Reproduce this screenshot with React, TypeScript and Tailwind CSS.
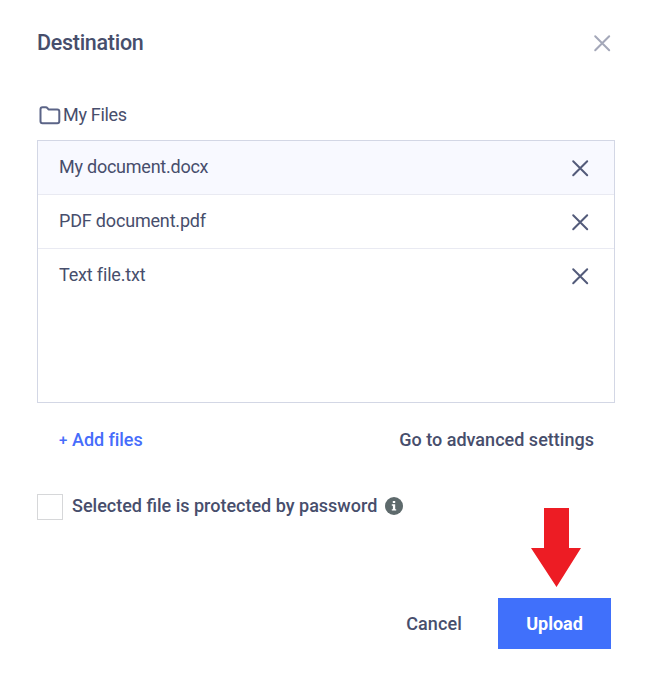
type IconProps = { className?: string };

function Cross({ className }: IconProps) {
  return (
    <svg viewBox="0 0 18 18" width="18" height="18" fill="none" stroke="currentColor" strokeWidth="2" strokeLinecap="round" className={className} aria-hidden="true">
      <path d="M2.2 2.2L16.2 16.2M16.2 2.2L2.2 16.2" />
    </svg>
  );
}

function Folder() {
  return (
    <svg viewBox="0 0 22 20" width="22" height="20" fill="none" stroke="#5b6487" strokeWidth="2" strokeLinejoin="round" aria-hidden="true">
      <path d="M1.5 4.2Q1.5 2.2 3.5 2.2H6.6Q7.8 2.2 8.5 3.2L9.5 4.5H18.3Q20.3 4.5 20.3 6.5V16.2Q20.3 18.2 18.3 18.2H3.5Q1.5 18.2 1.5 16.2Z" />
    </svg>
  );
}

function Info() {
  return (
    <svg viewBox="0 0 18 18" width="18" height="18" className="shrink-0" aria-hidden="true">
      <circle cx="9" cy="9" r="9" fill="#5e6a6c" />
      <path d="M7.8 4H10.2V6H7.8ZM6.8 7.3H10.2V12.2H11.2V13.6H6.8V12.2H7.9V8.7H6.8Z" fill="#fff" />
    </svg>
  );
}

const files = [
  { name: "My document.docx", row: "bg-[#f8f9ff]", text: "tracking-[-0.24px]" },
  { name: "PDF document.pdf", row: "bg-white", text: "tracking-[-0.18px]" },
  { name: "Text file.txt", row: "bg-white", text: "tracking-[-0.17px]" },
];

export default function App() {
  return (
    <main className="h-[675px] w-[652px] bg-white pt-7 pr-[37px] pl-[37px] font-['Roboto','Liberation_Sans',sans-serif] text-[18px] leading-6 whitespace-nowrap text-[#474e6c]">
      <header className="flex h-[30px] items-center justify-between pr-1">
        <h1 className="text-[21.5px] font-medium tracking-[-0.28px]">Destination</h1>
        <button aria-label="Close" className="text-[#a4a8b9]"><Cross /></button>
      </header>
      <div className="mt-[45px] flex h-6 items-center gap-[2px] pl-[2px]">
        <Folder />
        <span className="tracking-[-0.3px]">My Files</span>
      </div>
      <section className="mt-[13px] h-[263px] w-[578px] border border-[#d3d7e5]">
        {files.map((file) => (
          <div key={file.name} className={`flex h-[54px] items-center justify-between border-b border-[#e9eaf2] pr-[25.5px] pl-[21px] last:border-transparent ${file.row}`}>
            <span className={`pb-px ${file.text}`}>{file.name}</span>
            <button aria-label={`Remove ${file.name}`} className="text-[#535b7a]"><Cross /></button>
          </div>
        ))}
      </section>
      <div className="mt-[25px] flex h-6 items-center justify-between pr-[21px] pl-[22px] font-medium">
        <button className="flex items-center gap-[5px] text-[#466dfb]">
          <span className="w-[8px] text-[15px]">+</span>
          <span className="tracking-[-0.06px]">Add files</span>
        </button>
        <button className="tracking-[0.02px]">Go to advanced settings</button>
      </div>
      <div className="relative mt-[41px] flex h-[27px] items-center">
        <span className="mr-[9px] size-[26px] border-[1.5px] border-[#d6d7d9]" />
        <span className="pb-px font-medium">Selected file is protected by password</span>
        <span className="ml-2 pb-px"><Info /></span>
        <svg viewBox="0 0 50 79" width="50" height="79" className="absolute top-[15px] left-[494px]" aria-hidden="true">
          <path d="M13 0H38V40H50L25.5 79L0 40H13Z" fill="#ed1c24" />
        </svg>
      </div>
      <footer className="mt-[78px] flex h-[51px] items-center justify-end gap-9 pr-1 font-medium">
        <button className="tracking-[0.12px]">Cancel</button>
        <button className="h-[51px] w-[113px] bg-[#4070fb] font-bold text-white">Upload</button>
      </footer>
    </main>
  );
}
